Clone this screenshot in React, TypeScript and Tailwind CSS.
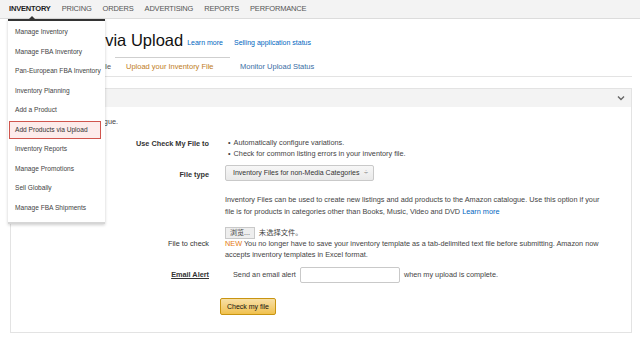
import React from "react";

const navItems = ["INVENTORY", "PRICING", "ORDERS", "ADVERTISING", "REPORTS", "PERFORMANCE"];

const menuItems = [
  "Manage Inventory",
  "Manage FBA Inventory",
  "Pan-European FBA Inventory",
  "Inventory Planning",
  "Add a Product",
  "Add Products via Upload",
  "Inventory Reports",
  "Manage Promotions",
  "Sell Globally",
  "Manage FBA Shipments",
];

const App = () => {
  return (
    <div
      className="relative w-[640px] h-[340px] overflow-hidden bg-white text-[#333] text-[7.3px] leading-none"
      style={{ fontFamily: '"Liberation Sans", Arial, "Noto Sans CJK SC", sans-serif' }}
    >
      {/* Top nav */}
      <div className="flex items-center h-[19px] bg-[#f3f3f3] border-b border-[#dcdcdc] pl-[9px] gap-[11px]">
        {navItems.map((item, i) => (
          <span
            key={item}
            className={`text-[7.5px] tracking-tight ${i === 0 ? "font-bold text-[#222]" : "text-[#555]"}`}
          >
            {item}
          </span>
        ))}
      </div>

      {/* Page */}
      <div className="pl-[10px] pr-[8px]">
        <div className="flex items-end h-[33px] pb-[4px] gap-[4px]">
          <h1 className="text-[16.5px] leading-none text-[#111] whitespace-nowrap">
            <span className="tracking-[-0.65px]">Add Products </span>via Upload
          </h1>
          <a className="text-[7px] text-[#0066c0] mb-[2px]">Learn more</a>
          <a className="text-[7px] text-[#0066c0] mb-[2px] ml-[7px]">Selling application status</a>
        </div>

        {/* Tabs */}
        <div className="flex items-end h-[22px] border-b border-[#e3e3e3] mt-[3px]">
          <div className="h-[19px] w-[105px] flex items-center justify-end pr-[4px] text-[7.3px] text-[#555] whitespace-nowrap">
            Download an Inventory File
          </div>
          <div className="h-[19px] w-[115px] flex items-center pl-[11px] border-t border-[#cfcfcf] bg-white text-[7.5px] text-[#c07d24] whitespace-nowrap">
            Upload your Inventory File
          </div>
          <div className="h-[19px] flex items-center pl-[10px] text-[7.5px] text-[#3a6ea5] whitespace-nowrap">
            Monitor Upload Status
          </div>
        </div>

        {/* Panel */}
        <div className="mt-[11px] border border-[#e3e3e3] h-[245px]">
          <div className="h-[18px] bg-[#f3f3f3] flex items-center justify-end pr-[6px]">
            <svg width="8" height="6" viewBox="0 0 8 6">
              <path d="M1 1.5 L4 4.5 L7 1.5" fill="none" stroke="#666" strokeWidth="1.4" />
            </svg>
          </div>
          <div className="pt-[11px] pl-[4px] text-[#444]">Add products to your catalogue.</div>

          <div className="grid grid-cols-[198px_1fr] gap-x-[16px] mt-[14px] text-[#444]">
            <div className="text-right font-bold text-[#333] pt-[1px]">Use Check My File to</div>
            <div className="flex flex-col gap-[3px] pl-[3px]">
              <div className="flex gap-[3px]">
                <span>•</span>
                <span>Automatically configure variations.</span>
              </div>
              <div className="flex gap-[3px]">
                <span>•</span>
                <span>Check for common listing errors in your inventory file.</span>
              </div>
            </div>

            <div className="text-right font-bold text-[#333] mt-[11px] self-center">File type</div>
            <div className="mt-[8px] flex">
              <div className="flex flex-none items-center h-[16px] w-[149px] min-w-[149px] pl-[7px] pr-[5px] border border-[#c9c9c9] rounded-[2px] bg-gradient-to-b from-[#f7f7f7] to-[#e9e9e9] text-[#333] whitespace-nowrap overflow-hidden">
                <span className="text-[7px]">Inventory Files for non-Media Categories</span>
                <span className="ml-auto pl-[3px] text-[#777]">÷</span>
              </div>
            </div>

            <div />
            <div className="mt-[13px] leading-[12px]">
              Inventory Files can be used to create new listings and add products to the Amazon catalogue. Use this option if your
              <br />
              file is for products in categories other than Books, Music, Video and DVD{" "}
              <a className="text-[#0066c0]">Learn more</a>
            </div>

            <div className="text-right text-[#333] mt-[9px] pt-[13px]">File to check</div>
            <div className="mt-[9px]">
              <div className="flex items-center gap-[4px]">
                <span className="inline-flex items-center h-[12px] px-[4px] border border-[#c9c9c9] bg-[#eeeeee] text-[7px]">
                  浏览...
                </span>
                <span>未选择文件。</span>
              </div>
              <div className="leading-[11px] -mt-[1px]">
                <span className="text-[#e47911]">NEW</span> You no longer have to save your inventory template as a tab-delimited text file before submitting. Amazon now
                <br />
                accepts inventory templates in Excel format.
              </div>
            </div>

            <div className="text-right text-[#333] underline font-bold self-center mt-[7px]">Email Alert</div>
            <div className="flex items-center mt-[7px] pl-[8px] gap-[4px]">
              <span>Send an email alert</span>
              <span className="inline-block h-[16px] w-[100px] border border-[#c9c9c9] rounded-[2px] bg-white" />
              <span>when my upload is complete.</span>
            </div>

            <div />
            <div className="mt-[15px] -ml-[5px]">
              <button className="h-[17px] px-[6px] border border-[#c89411] rounded-[2px] bg-gradient-to-b from-[#f7dfa5] to-[#f0c14b] text-[7px] text-[#111]">
                Check my file
              </button>
            </div>
          </div>
        </div>
      </div>

      {/* Dropdown menu */}
      <div className="absolute left-[8px] top-[19px] w-[97px] bg-white border-t-2 border-b-2 border-t-[#333] border-b-[#d6d6d6] shadow-[0_1px_3px_rgba(0,0,0,0.2)] pt-[2px] pb-[4px]">
        <div className="absolute -top-[5px] left-[21px] w-0 h-0 border-l-[3px] border-r-[3px] border-b-[3px] border-l-transparent border-r-transparent border-b-[#333]" />
        {menuItems.map((item) => (
          <div key={item} className="h-[19.5px] flex items-center whitespace-nowrap text-[6.6px]">
            {item === "Add Products via Upload" ? (
              <div className="ml-[1px] w-[92px] h-[18px] flex items-center pl-[5px] border border-[#d0554d] bg-[#fdeceb] text-[#333]">
                {item}
              </div>
            ) : (
              <span className="pl-[7px] text-[#444]">{item}</span>
            )}
          </div>
        ))}
      </div>
    </div>
  );
};

export default App;
